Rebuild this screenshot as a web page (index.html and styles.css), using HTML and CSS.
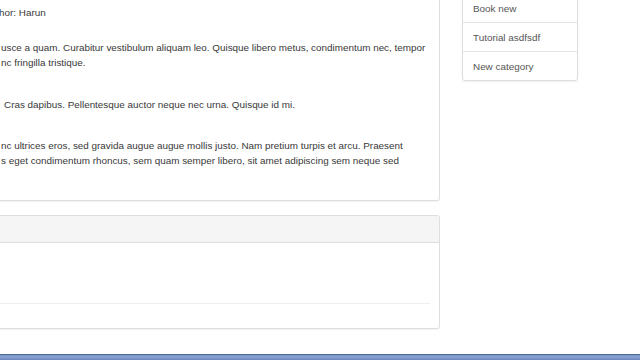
FILE: index.html
```html
<!DOCTYPE html>
<html>
<head>
<meta charset="utf-8">
<link rel="stylesheet" href="styles.css">
</head>
<body>
<div class="page">
  <div class="layout">
    <div class="main">
      <div class="panel post">
        <div class="line meta">hor: Harun</div>
        <div class="para first">
          <div class="line">usce a quam. Curabitur vestibulum aliquam leo. Quisque libero metus, condimentum nec, tempor</div>
          <div class="line">nc fringilla tristique.</div>
        </div>
        <div class="para second">
          <div class="line indent">Cras dapibus. Pellentesque auctor neque nec urna. Quisque id mi.</div>
        </div>
        <div class="para third">
          <div class="line">nc ultrices eros, sed gravida augue augue mollis justo. Nam pretium turpis et arcu. Praesent</div>
          <div class="line">s eget condimentum rhoncus, sem quam semper libero, sit amet adipiscing sem neque sed</div>
        </div>
      </div>
      <div class="panel comments">
        <div class="panel-heading"></div>
        <div class="panel-body">
          <div class="spacer"></div>
          <hr class="rule">
        </div>
      </div>
    </div>
    <aside class="side">
      <ul class="list-group">
        <li class="item">Book new</li>
        <li class="item">Tutorial asdfsdf</li>
        <li class="item">New category</li>
      </ul>
    </aside>
  </div>
  <div class="taskbar"></div>
</div>
</body>
</html>
```

FILE: styles.css
```css
html, body {
  margin: 0;
  padding: 0;
  background: #fff;
  overflow: hidden;
}
body {
  font-family: "Liberation Sans", Arial, sans-serif;
  font-size: 9.9px;
  line-height: 15px;
  color: #383838;
}
.page {
  width: 640px;
  height: 360px;
  display: flex;
  flex-direction: column;
  overflow: hidden;
}
.layout {
  display: flex;
  gap: 22px;
  margin-left: -20px;
  flex: 1;
}
.main {
  width: 460px;
  display: flex;
  flex-direction: column;
  gap: 14px;
}
.panel {
  border: 1px solid #dedede;
  border-radius: 3px;
  background: #fff;
  box-shadow: 0 1px 1px rgba(0,0,0,0.05);
}
.post {
  margin-top: -11px;
  height: 212px;
  box-sizing: border-box;
  padding: 15px 0 0 20px;
}
.line {
  white-space: nowrap;
  height: 15px;
}
.meta {
  margin-left: -2px;
}
.first {
  margin-top: 20px;
}
.second {
  margin-top: 27px;
}
.third {
  margin-top: 26px;
}
.indent {
  padding-left: 3px;
}
.comments {
  height: 114px;
  box-sizing: border-box;
  display: flex;
  flex-direction: column;
}
.panel-heading {
  height: 26px;
  background: #f5f5f5;
  border-bottom: 1px solid #dedede;
  border-radius: 3px 3px 0 0;
}
.panel-body {
  padding: 0 9px 0 0;
}
.spacer {
  height: 60px;
}
.rule {
  margin: 0;
  border: 0;
  border-top: 1px solid #eee;
}
.side {
  width: 116px;
}
.list-group {
  list-style: none;
  margin: -7px 0 0 0;
  padding: 0;
  border: 1px solid #dedede;
  border-radius: 3px;
  box-shadow: 0 1px 2px rgba(0,0,0,0.07);
}
.item {
  height: 28px;
  line-height: 29px;
  padding-left: 10px;
  color: #555;
  border-bottom: 1px solid #e3e3e3;
}
.item:last-child {
  border-bottom: 0;
}
.taskbar {
  height: 6px;
  background: linear-gradient(#4f6c9e 0, #4f6c9e 1px, #7590c4 1px, #8aa4d4 3px, #6885b9 6px);
}
```
